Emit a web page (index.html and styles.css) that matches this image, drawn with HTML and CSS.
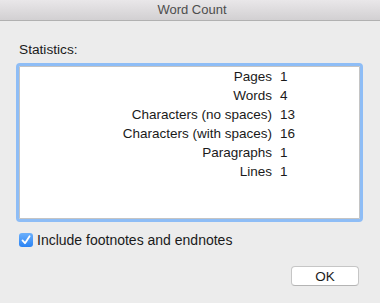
FILE: index.html
```html
<!DOCTYPE html>
<html lang="en">
<head>
    <meta charset="UTF-8">
    <title>Word Count</title>
    <link rel="stylesheet" href="styles.css">
</head>
<body>
    <div class="titlebar">Word Count</div>

    <div class="content">
        <div class="label">Statistics:</div>

        <div class="stats">
            <div class="name">Pages</div><div class="value">1</div>
            <div class="name">Words</div><div class="value">4</div>
            <div class="name">Characters (no spaces)</div><div class="value">13</div>
            <div class="name">Characters (with spaces)</div><div class="value">16</div>
            <div class="name">Paragraphs</div><div class="value">1</div>
            <div class="name">Lines</div><div class="value">1</div>
        </div>

        <label class="check">
            <span class="box">
                <svg width="14" height="14" viewBox="0 0 14 14">
                    <path d="M3.5 7.4 L6 10.2 L10.6 3.2" fill="none" stroke="#fff" stroke-width="1.8" stroke-linecap="round" stroke-linejoin="round"/>
                </svg>
            </span>
            Include footnotes and endnotes
        </label>

        <div class="buttons">
            <button class="ok">OK</button>
        </div>
    </div>
</body>
</html>
```

FILE: styles.css
```css
* {
    font-family: "Liberation Sans", Arial, sans-serif;
    box-sizing: border-box;
}
body {
    margin: 0;
    background-color: #ececec;
    color: #1a1a1a;
    font-size: 13px;
}
.titlebar {
    height: 21px;
    line-height: 20px;
    text-align: center;
    color: #4d4d4d;
    background: linear-gradient(#e9e7e9, #d2d0d2);
    border-bottom: 1px solid #b1b1b1;
    padding-left: 4px;
}
.content {
    padding: 21px 17px 0 16px;
}
.label {
    font-size: 13.7px;
    line-height: 16px;
    padding-left: 3px;
    margin-bottom: 5px;
}
.stats {
    height: 159px;
    background-color: #fff;
    border: 3px solid #8ebdf6;
    border-radius: 4px;
    box-shadow: inset 0 0 0 1px #c4c4c4;
    padding-top: 1px;
    display: grid;
    grid-template-columns: 253px 1fr;
    grid-auto-rows: 19px;
    align-content: start;
    column-gap: 8px;
    font-size: 13.5px;
    line-height: 19px;
}
.name {
    text-align: right;
}
.check {
    display: flex;
    align-items: center;
    height: 16px;
    margin-top: 10px;
    padding-left: 3px;
    font-size: 14px;
    line-height: 16px;
}
.box {
    width: 14px;
    height: 14px;
    border-radius: 3px;
    background: linear-gradient(#6cb0fb, #2a83f4);
    margin-right: 4px;
    display: flex;
}
.buttons {
    display: flex;
    justify-content: flex-end;
    margin-top: 18px;
    padding-right: 4px;
}
.ok {
    width: 68px;
    height: 20px;
    background-color: #fff;
    border: 1px solid #c6c6c6;
    border-bottom-color: #b4b4b4;
    border-radius: 4px;
    font-size: 13.5px;
    color: #1a1a1a;
    padding: 0;
}
```
